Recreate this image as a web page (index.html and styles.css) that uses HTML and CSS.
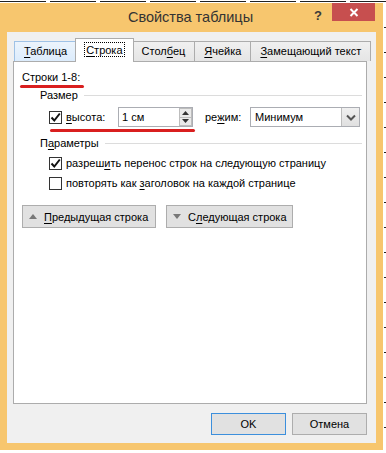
FILE: index.html
```html
<!DOCTYPE html>
<html lang="ru">
<head>
    <meta charset="UTF-8">
    <meta name="viewport" content="width=device-width, initial-scale=1.0">
    <link rel="stylesheet" href="styles.css">
    <title>Свойства таблицы</title>
</head>
<body>
    <div class="doc-top"></div>
    <div class="desk">
        <div class="window">
            <div class="titlebar">
                <span></span>
                <span class="title">Свойства таблицы</span>
                <div class="controls">
                    <span class="help">?</span>
                    <span class="close">
                        <svg width="10" height="9" viewBox="0 0 10 9"><path d="M1.5 1 L8.5 8 M8.5 1 L1.5 8" stroke="#fff" stroke-width="2"/></svg>
                    </span>
                </div>
            </div>
            <div class="client">
                <div class="tabs">
                    <div class="tab hover"><u>Т</u>аблица</div>
                    <div class="tab active"><span class="focus"><u>С</u>трока</span></div>
                    <div class="tab">Стол<u>б</u>ец</div>
                    <div class="tab"><u>Я</u>чейка</div>
                    <div class="tab"><u>З</u>амещающий текст</div>
                </div>
                <div class="panel">
                    <div class="rows-title">Строки 1-8:</div>

                    <div class="group">
                        <div class="group-head">Размер</div>
                        <div class="size-row">
                            <span class="check on">
                                <svg width="11" height="11" viewBox="0 0 11 11"><path d="M1.5 5.5 L4.3 8.5 L9.8 1.5" stroke="#111" stroke-width="2" fill="none"/></svg>
                            </span>
                            <span class="size-label"><u>в</u>ысота:</span>
                            <div class="spin">
                                <span class="spin-value">1 см</span>
                                <span class="spin-btns">
                                    <span class="spin-btn"><svg width="7" height="4" viewBox="0 0 7 4"><path d="M0 4 L3.5 0 L7 4 Z" fill="#333"/></svg></span>
                                    <span class="spin-btn"><svg width="7" height="4" viewBox="0 0 7 4"><path d="M0 0 L3.5 4 L7 0 Z" fill="#333"/></svg></span>
                                </span>
                            </div>
                            <span class="mode-label">ре<u>ж</u>им:</span>
                            <div class="select">
                                <span class="select-value">Минимум</span>
                                <span class="select-btn">
                                    <svg width="10" height="7" viewBox="0 0 10 7"><path d="M1 1.5 L5 5.5 L9 1.5" stroke="#555" stroke-width="2" fill="none"/></svg>
                                </span>
                            </div>
                        </div>
                    </div>

                    <div class="group">
                        <div class="group-head">П<u>а</u>раметры</div>
                        <div class="check-row">
                            <span class="check on">
                                <svg width="11" height="11" viewBox="0 0 11 11"><path d="M1.5 5.5 L4.3 8.5 L9.8 1.5" stroke="#111" stroke-width="2" fill="none"/></svg>
                            </span>
                            <span>разреш<u>и</u>ть перенос строк на следующую страницу</span>
                        </div>
                        <div class="check-row">
                            <span class="check"></span>
                            <span>повторять как <u>з</u>аголовок на каждой странице</span>
                        </div>
                    </div>

                    <div class="nav-row">
                        <button class="nav-button prev">
                            <svg class="nav-icon" width="8" height="5" viewBox="0 0 8 5"><path d="M0 5 L4 0 L8 5 Z" fill="#777"/></svg>
                            <span><u>П</u>редыдущая строка</span>
                        </button>
                        <button class="nav-button next">
                            <svg class="nav-icon" width="8" height="5" viewBox="0 0 8 5"><path d="M0 0 L4 5 L8 0 Z" fill="#777"/></svg>
                            <span>С<u>л</u>едующая строка</span>
                        </button>
                    </div>
                </div>
                <div class="dialog-buttons">
                    <button class="dlg-button default">OK</button>
                    <button class="dlg-button">Отмена</button>
                </div>
            </div>
        </div>
        <div class="doc-side"></div>
    </div>
</body>
</html>
```

FILE: styles.css
```css
body {
    margin: 0;
    padding: 0;
    background: #fff;
    font-family: "Liberation Sans", Arial, sans-serif;
    font-size: 11px;
    color: #000;
    overflow: hidden;
}
u {
    text-decoration: underline;
    text-underline-offset: 2px;
}
.doc-top {
    height: 3px;
    background: repeating-linear-gradient(90deg, #222 0 46px, #fff 46px 50px);
    background-size: 100% 1px;
    background-repeat: no-repeat;
    background-position: 0 1px;
}
.desk {
    display: flex;
}
.window {
    width: 383px;
    height: 447px;
    box-sizing: border-box;
    background-color: #f7c66e;
    padding: 0 7px 7px 7px;
    display: flex;
    flex-direction: column;
}
.doc-side {
    flex: 1;
    background: repeating-linear-gradient(180deg, #fff 0 24px, #222 24px 25px);
    margin-left: 1px;
}

/* title bar */
.titlebar {
    height: 29px;
    margin: 0 -7px;
    display: grid;
    grid-template-columns: 1fr auto 1fr;
    align-items: start;
}
.title {
    font-size: 14.5px;
    color: #333;
    line-height: 29px;
    padding-right: 2px;
}
.controls {
    display: flex;
    justify-content: flex-end;
    align-items: flex-start;
}
.help {
    font-weight: bold;
    font-size: 13px;
    color: #3a3a3a;
    line-height: 17px;
    margin-top: 4px;
    margin-right: 10px;
}
.close {
    width: 43px;
    height: 18px;
    background-color: #c74f4f;
    margin-right: 8px;
    display: flex;
    align-items: center;
    justify-content: center;
}

/* client area */
.client {
    flex: 1;
    background-color: #f0f0f0;
    padding: 6px 9px 8px 6px;
    display: flex;
    flex-direction: column;
}
.tabs {
    display: flex;
    align-items: flex-end;
    height: 23px;
    padding-left: 1px;
}
.tab {
    height: 20px;
    box-sizing: border-box;
    padding: 0 9px;
    line-height: 19px;
    border: 1px solid #acacac;
    border-bottom: none;
    margin-left: -1px;
    background: linear-gradient(#f0f0f0, #e5e5e5);
    white-space: nowrap;
}
.tab.hover {
    margin-left: 0;
    background: linear-gradient(#ecf4fc, #dcecfc);
    border-color: #9fc2e6;
}
.tab.active {
    height: 24px;
    margin: 0 -2px -1px -2px;
    padding: 0 9px;
    line-height: 22px;
    background: #fff;
    position: relative;
    z-index: 1;
}
.tab.active + .tab {
    margin-left: 0;
}
.focus {
    outline: 1px dotted #000;
    outline-offset: 0;
    padding: 1px 1px 0 1px;
}
.panel {
    flex: 1;
    background: #fff;
    border: 1px solid #acacac;
    padding: 7px 4px 0 8px;
}

.rows-title {
    line-height: 16px;
    position: relative;
    display: inline-block;
}
.rows-title::after {
    content: "";
    position: absolute;
    left: -2px;
    width: 64px;
    bottom: -3px;
    height: 3px;
    border-radius: 2px;
    background-color: #d91f1f;
}

.group {
    padding-left: 18px;
    margin-top: 2px;
}
.group + .group {
    margin-top: 8px;
}
.group-head {
    display: flex;
    align-items: center;
    line-height: 16px;
}
.group-head::after {
    content: "";
    flex: 1;
    height: 1px;
    background-color: #dcdcdc;
    margin-left: 6px;
}

.size-row {
    display: flex;
    align-items: center;
    height: 20px;
    margin-top: 4px;
    padding-left: 9px;
    position: relative;
}
.size-row::after {
    content: "";
    position: absolute;
    left: 10px;
    width: 145px;
    bottom: -5px;
    height: 3px;
    border-radius: 2px;
    background-color: #d91f1f;
}
.check {
    width: 13px;
    height: 13px;
    box-sizing: border-box;
    border: 1px solid #333;
    background: #fff;
    display: flex;
    align-items: center;
    justify-content: center;
    flex-shrink: 0;
    margin-right: 4px;
}
.size-label {
    width: 52px;
}
.spin {
    width: 75px;
    height: 20px;
    box-sizing: border-box;
    border: 1px solid #abadb3;
    display: flex;
    align-items: center;
    justify-content: space-between;
}
.spin-value {
    padding-left: 3px;
}
.spin-btns {
    display: flex;
    flex-direction: column;
    width: 13px;
    height: 18px;
}
.spin-btn {
    flex: 1;
    display: flex;
    align-items: center;
    justify-content: center;
    background: #eaeaea;
    border: 1px solid #bdbdbd;
    margin-top: -1px;
}
.spin-btn:first-child {
    margin-top: 0;
}
.mode-label {
    width: 45px;
    margin-left: 12px;
}
.select {
    width: 110px;
    height: 20px;
    box-sizing: border-box;
    border: 1px solid #abadb3;
    display: flex;
    align-items: center;
    justify-content: space-between;
}
.select-value {
    padding-left: 4px;
}
.select-btn {
    width: 17px;
    height: 18px;
    background: linear-gradient(#f0f0f0, #e0e0e0);
    border-left: 1px solid #bdbdbd;
    display: flex;
    align-items: center;
    justify-content: center;
}

.check-row {
    display: flex;
    align-items: center;
    height: 20px;
    padding-left: 9px;
    white-space: nowrap;
}
.group-head + .check-row {
    margin-top: 2px;
}

.nav-row {
    display: flex;
    gap: 10px;
    margin-top: 12px;
}
.nav-button {
    height: 23px;
    box-sizing: border-box;
    border: 1px solid #adadad;
    background: #e1e1e1;
    font-family: inherit;
    font-size: 11px;
    color: #000;
    display: flex;
    align-items: center;
    gap: 7px;
    padding: 0 6px;
    white-space: nowrap;
}
.nav-icon {
    flex-shrink: 0;
}
.nav-button.prev {
    width: 134px;
}
.nav-button.next {
    width: 127px;
}

.dialog-buttons {
    display: flex;
    justify-content: flex-end;
    gap: 6px;
    margin-top: 9px;
}
.dlg-button {
    width: 75px;
    height: 22px;
    box-sizing: border-box;
    border: 1px solid #adadad;
    background: #e1e1e1;
    font-family: inherit;
    font-size: 11px;
    color: #000;
    padding: 0;
}
.dlg-button.default {
    border-color: #3c8fdc;
}
```
